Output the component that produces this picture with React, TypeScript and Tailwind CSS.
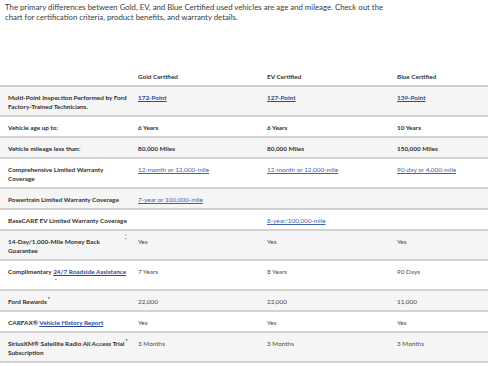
import React from 'react';

type Cell = React.ReactNode;

interface Row {
  label: Cell;
  values: Cell[];
  shaded?: boolean;
  bold?: boolean;
}

function Link({ children, strong = false }: { children: React.ReactNode; strong?: boolean }) {
  return (
    <span className={`underline underline-offset-1 ${strong ? 'font-bold text-[#2b4a9a]' : 'text-[#3f63b0]'}`}>
      {children}
    </span>
  );
}

function Sup() {
  return <span className="relative -top-[3px] ml-[1px] text-[5px] leading-none">*</span>;
}

const rows: Row[] = [
  {
    label: 'Multi-Point Inspection Performed by Ford Factory-Trained Technicians.',
    values: [<Link strong>172-Point</Link>, <Link strong>127-Point</Link>, <Link strong>139-Point</Link>],
    shaded: true,
  },
  { label: 'Vehicle age up to:', values: ['6 Years', '6 Years', '10 Years'], bold: true },
  { label: 'Vehicle mileage less than:', values: ['80,000 Miles', '80,000 Miles', '150,000 Miles'], shaded: true, bold: true },
  {
    label: 'Comprehensive Limited Warranty Coverage',
    values: [<Link>12-month or 12,000-mile</Link>, <Link>12-month or 12,000-mile</Link>, <Link>90-day or 4,000-mile</Link>],
  },
  { label: 'Powertrain Limited Warranty Coverage', values: [<Link>7-year or 100,000-mile</Link>, '', ''], shaded: true },
  { label: 'BaseCARE EV Limited Warranty Coverage', values: ['', <Link>8-year/100,000-mile</Link>, ''] },
  {
    label: (
      <div className="flex justify-between pr-[2px]">
        <span className="w-[100px]">14-Day/1,000-Mile Money Back Guarantee</span>
        <span className="text-[6px] leading-[6px] -mt-[3px]">⁚</span>
      </div>
    ),
    values: ['Yes', 'Yes', 'Yes'],
    shaded: true,
  },
  {
    label: (
      <>
        Complimentary <Link strong>24/7 Roadside Assistance</Link>
        <div className="h-[9px] pl-[47px] text-[6px] leading-[6px]">·</div>
      </>
    ),
    values: ['7 Years', '8 Years', '90 Days'],
  },
  {
    label: (
      <>
        Ford Rewards<Sup />
      </>
    ),
    values: ['22,000', '22,000', '11,000'],
    shaded: true,
  },
  {
    label: (
      <>
        CARFAX® <Link strong>Vehicle History Report</Link>
      </>
    ),
    values: ['Yes', 'Yes', 'Yes'],
  },
  {
    label: (
      <>
        SiriusXM® Satellite Radio All Access Trial<Sup /> Subscription
      </>
    ),
    values: ['3 Months', '3 Months', '3 Months'],
    shaded: true,
  },
];

export default function App() {
  return (
    <div className="w-[488px] h-[366px] overflow-hidden bg-white text-[#333] font-['Lato',sans-serif]">
      <p className="px-[5px] pt-[2px] text-[7.8px] leading-[10px] text-[#3a3a3a] whitespace-nowrap">
        The primary differences between Gold, EV, and Blue Certified used vehicles are age and mileage. Check out the
        <br />
        chart for certification criteria, product benefits, and warranty details.
      </p>

      <div className="mt-[40px]">
        <div className="grid grid-cols-[130px_129px_130px_1fr] border-b-2 border-[#cfcfcf] text-[6.4px] leading-[9px] font-bold text-[#333]">
          <div className="pl-[8px] pt-[10px] pb-[4px]"></div>
          <div className="pl-[8px] pt-[10px] pb-[4px]">Gold Certified</div>
          <div className="pl-[8px] pt-[10px] pb-[4px]">EV Certified</div>
          <div className="pl-[8px] pt-[10px] pb-[4px]">Blue Certified</div>
        </div>

        {rows.map((row, i) => (
          <div
            key={i}
            className={`grid grid-cols-[130px_129px_130px_1fr] border-b-2 border-[#d2d2d2] text-[6.4px] leading-[9px] ${
              row.shaded ? 'bg-[#f5f5f5]' : 'bg-white'
            }`}
          >
            <div className="pl-[8px] pr-[2px] pt-[6px] pb-[4px] font-bold text-[#2f2f2f]">{row.label}</div>
            {row.values.map((v, j) => (
              <div
                key={j}
                className={`pl-[8px] pr-[4px] pt-[6px] pb-[4px] ${
                  row.bold ? 'font-bold text-[#2f2f2f]' : 'text-[#4a4a4a]'
                }`}
              >
                {v}
              </div>
            ))}
          </div>
        ))}
      </div>
    </div>
  );
}
